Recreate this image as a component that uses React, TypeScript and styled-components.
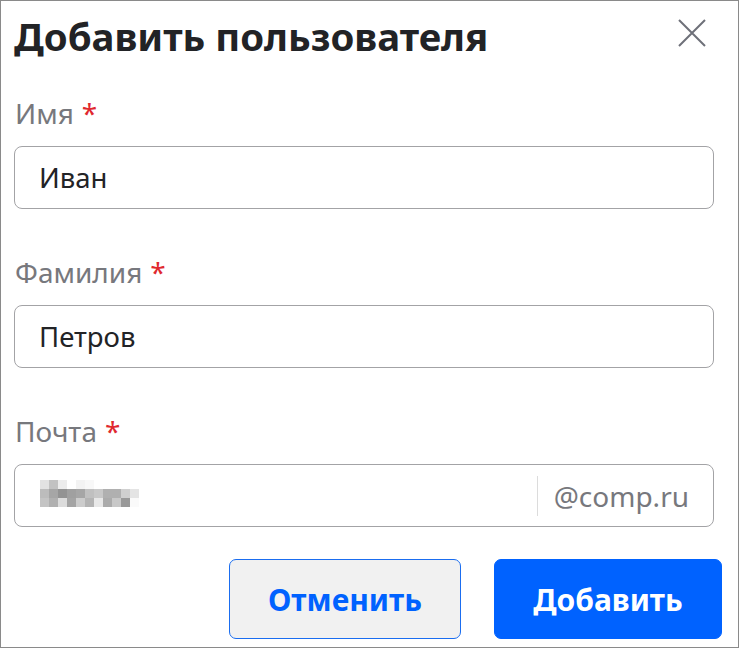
import React, { useState } from "react";
import styled, { createGlobalStyle } from "styled-components";

const GlobalStyle = createGlobalStyle`
  html, body {
    margin: 0;
    padding: 0;
    background: #ffffff;
  }
  * {
    box-sizing: border-box;
  }
`;

const Dialog = styled.div`
  font-family: "Noto Sans", "Open Sans", sans-serif;
  width: 739px;
  height: 648px;
  border: 1px solid #8a8a8a;
  background: #fff;
  padding: 0 16px 0 13px;
  display: flex;
  flex-direction: column;
`;

const Header = styled.div`
  display: flex;
  align-items: center;
  justify-content: space-between;
  height: 70px;
`;

const Title = styled.h1`
  margin: 0;
  font-size: 38.4px;
  font-weight: 700;
  color: #222326;
`;

const CloseButton = styled.button`
  border: 0;
  background: none;
  padding: 0;
  width: 32px;
  height: 32px;
  margin-right: 14px;
  margin-top: -6px;
  display: flex;
  align-items: center;
  justify-content: center;
  cursor: pointer;
`;

const Form = styled.div`
  display: flex;
  flex-direction: column;
  gap: 45px;
  padding: 24px 8px 0 0;
`;

const Field = styled.div`
  display: flex;
  flex-direction: column;
  gap: 15px;
`;

const Label = styled.label`
  font-size: 28px;
  color: #77787d;
  line-height: 36px;
  padding-left: 1px;
`;

const Star = styled.span`
  color: #e0282e;
  margin-left: 8px;
`;

const InputBox = styled.div`
  display: flex;
  align-items: center;
  height: 63px;
  border: 1px solid #a3a3a6;
  border-radius: 8px;
  background: #fff;
  padding: 0 24px 0 24px;
`;

const Input = styled.input`
  flex: 1;
  border: 0;
  outline: none;
  font-family: inherit;
  font-size: 27.5px;
  color: #222326;
  background: transparent;
  padding: 0;
  min-width: 0;
`;

const Suffix = styled.span`
  display: flex;
  align-items: center;
  height: 40px;
  border-left: 1px solid #dcdcdc;
  padding-left: 16px;
  font-size: 28px;
  color: #77787d;
`;

const Blur = styled.svg`
  flex: none;
  margin-left: 1px;
  margin-bottom: 5px;
`;

const Spacer = styled.div`
  flex: 1;
`;

const Footer = styled.div`
  display: flex;
  justify-content: flex-end;
  gap: 33px;
  margin-top: 32px;
`;

const Button = styled.button<{ $primary?: boolean }>`
  font-family: inherit;
  font-size: 30px;
  font-weight: 700;
  height: 80px;
  border-radius: 7px;
  cursor: pointer;
  padding: 0;
  border: 1px solid ${(p) => (p.$primary ? "#0062ff" : "#1a6df0")};
  background: ${(p) => (p.$primary ? "#0062ff" : "#f1f1f1")};
  color: ${(p) => (p.$primary ? "#ffffff" : "#0062ff")};
  width: ${(p) => (p.$primary ? "228px" : "232px")};
`;

const blurCells = [
  ["#e2e2e2", "#c2c2c2", "#ececec", "#fff", "#f3f3f3", "#f8f8f8", "#fff", "#fff", "#fff", "#fff", "#fff"],
  ["#bcbcbc", "#a6a6a6", "#939393", "#a0a0a0", "#a6a6a6", "#c0c0c0", "#c8c8c8", "#b0b0b0", "#b0b0b0", "#d0d0d0", "#e4e4e4"],
  ["#c4c4c4", "#b0b0b0", "#dcdcdc", "#a4a4a4", "#cccccc", "#b4b4b4", "#e8e8e8", "#ababab", "#c8c8c8", "#999999", "#fafafa"],
];

function BlurredEmail() {
  return (
    <Blur width="99" height="27" viewBox="0 0 99 27">
      {blurCells.map((row, r) =>
        row.map((c, i) => <rect key={`${r}-${i}`} x={i * 9} y={r * 9} width="9" height="9" fill={c} />)
      )}
    </Blur>
  );
}

export default function App() {
  const [name, setName] = useState("Иван");
  const [surname, setSurname] = useState("Петров");

  return (
    <>
      <GlobalStyle />
      <Dialog>
        <Header>
          <Title>Добавить пользователя</Title>
          <CloseButton aria-label="Закрыть">
            <svg width="28" height="28" viewBox="0 0 28 28">
              <path d="M1 1 L27 27 M27 1 L1 27" stroke="#6e7079" strokeWidth="2" />
            </svg>
          </CloseButton>
        </Header>

        <Form>
          <Field>
            <Label>
              Имя<Star>*</Star>
            </Label>
            <InputBox>
              <Input value={name} onChange={(e) => setName(e.target.value)} />
            </InputBox>
          </Field>

          <Field>
            <Label>
              Фамилия<Star>*</Star>
            </Label>
            <InputBox>
              <Input value={surname} onChange={(e) => setSurname(e.target.value)} />
            </InputBox>
          </Field>

          <Field>
            <Label>
              Почта<Star>*</Star>
            </Label>
            <InputBox>
              <BlurredEmail />
              <Spacer />
              <Suffix>@comp.ru</Suffix>
            </InputBox>
          </Field>
        </Form>

        <Footer>
          <Button>Отменить</Button>
          <Button $primary>Добавить</Button>
        </Footer>
      </Dialog>
    </>
  );
}
